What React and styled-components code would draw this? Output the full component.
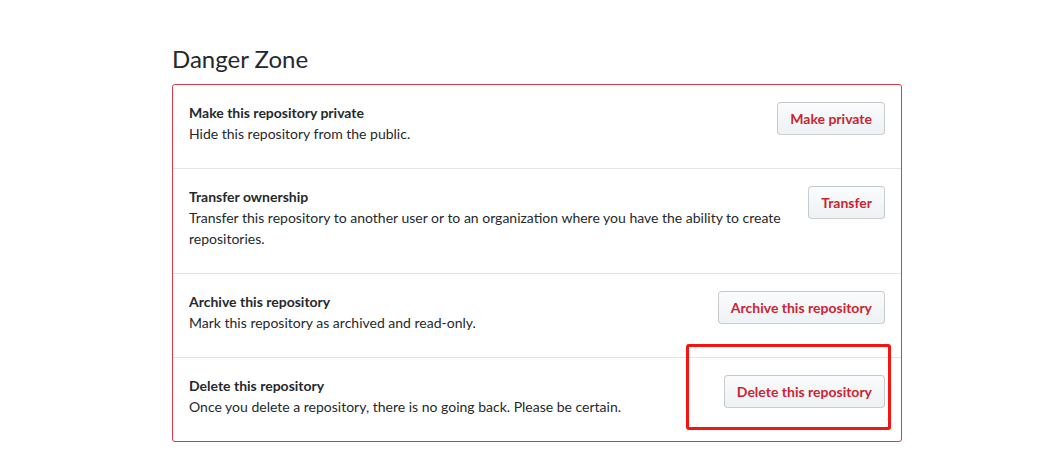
import React from "react";
import styled, { createGlobalStyle } from "styled-components";

const GlobalStyle = createGlobalStyle`
  html, body {
    margin: 0;
    padding: 0;
    background: #fff;
  }
  body {
    font-family: Lato, "Noto Sans", "Liberation Sans", sans-serif;
    color: #24292e;
  }
`;

const Page = styled.div`
  padding: 44px 0 0 172px;
  width: 730px;
`;

const Heading = styled.h2`
  margin: 0 0 10px;
  font-size: 24px;
  line-height: 30px;
  font-weight: 400;
  color: #24292e;
`;

const DangerBox = styled.ul`
  list-style: none;
  margin: 0;
  padding: 0;
  border: 1px solid #d73a49;
  border-radius: 3px;
`;

const Row = styled.li`
  position: relative;
  display: flex;
  align-items: flex-start;
  gap: 16px;
  padding: 17px 16px 24px;
  border-top: ${(p) => (p.$first ? "none" : "1px solid #e1e4e8")};
`;

const Info = styled.div`
  flex: 1;
  font-size: 14px;
  line-height: 21px;
`;

const Title = styled.strong`
  display: block;
  font-weight: 700;
`;

const Desc = styled.p`
  margin: 0;
`;

const DangerButton = styled.button`
  flex-shrink: 0;
  padding: 6px 12px;
  font-family: inherit;
  font-size: 14px;
  font-weight: 700;
  line-height: 19px;
  color: #cb2431;
  background: linear-gradient(-180deg, #fafbfc 0%, #eff3f6 90%);
  border: 1px solid rgba(27, 31, 35, 0.2);
  border-radius: 4px;
  cursor: pointer;
`;

const Highlight = styled.div`
  position: absolute;
  top: -14px;
  right: 10px;
  width: 199px;
  height: 80px;
  border: 3px solid #f5140f;
  border-radius: 3px;
  pointer-events: none;
`;

const rows = [
  {
    title: "Make this repository private",
    desc: "Hide this repository from the public.",
    action: "Make private",
  },
  {
    title: "Transfer ownership",
    desc:
      "Transfer this repository to another user or to an organization where you have the ability to create repositories.",
    action: "Transfer",
  },
  {
    title: "Archive this repository",
    desc: "Mark this repository as archived and read-only.",
    action: "Archive this repository",
  },
  {
    title: "Delete this repository",
    desc: "Once you delete a repository, there is no going back. Please be certain.",
    action: "Delete this repository",
    marked: true,
  },
];

export default function App() {
  return (
    <>
      <GlobalStyle />
      <Page>
        <Heading>Danger Zone</Heading>
        <DangerBox>
          {rows.map((r, i) => (
            <Row key={r.action} $first={i === 0}>
              <Info>
                <Title>{r.title}</Title>
                <Desc>{r.desc}</Desc>
              </Info>
              <DangerButton>{r.action}</DangerButton>
              {r.marked && <Highlight />}
            </Row>
          ))}
        </DangerBox>
      </Page>
    </>
  );
}
